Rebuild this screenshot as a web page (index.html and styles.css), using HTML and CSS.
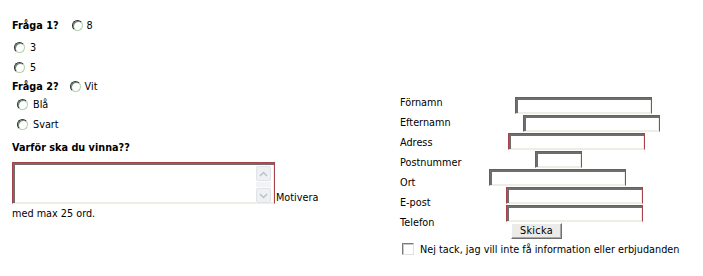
FILE: index.html
```html
<!DOCTYPE html>
<html lang="sv">
<head>
<meta charset="UTF-8"/>
<title>Tävling</title>
<link rel="stylesheet" href="styles.css">
</head>
<body>
<div class="page">
  <!-- Left: questions -->
  <div class="quiz">
    <div class="row r1"><b class="q">Fråga 1?</b><input type="radio" name="q1" class="radio"><span>8</span></div>
    <div class="row r2"><input type="radio" name="q1" class="radio"><span>3</span></div>
    <div class="row r3"><input type="radio" name="q1" class="radio"><span>5</span></div>
    <div class="row r4"><b class="q q2">Fråga 2?</b><input type="radio" name="q2" class="radio"><span>Vit</span></div>
    <div class="row r5 indent"><input type="radio" name="q2" class="radio"><span>Blå</span></div>
    <div class="row r6 indent"><input type="radio" name="q2" class="radio"><span>Svart</span></div>
    <div class="row r7"><b>Varför ska du vinna??</b></div>

    <div class="motivate">
      <span class="ta-wrap">
        <textarea class="ta"></textarea>
        <span class="fake-scroll">
          <span class="sb-btn"><svg width="9" height="6" viewBox="0 0 9 6"><path d="M1 5 L4.5 1.5 L8 5" fill="none" stroke="#b9c2cc" stroke-width="1.5"/></svg></span>
          <span class="sb-track"></span>
          <span class="sb-btn"><svg width="9" height="6" viewBox="0 0 9 6"><path d="M1 1 L4.5 4.5 L8 1" fill="none" stroke="#b9c2cc" stroke-width="1.5"/></svg></span>
        </span>
      </span>
      <span class="hint">Motivera</span>
    </div>
    <div class="hint-2">med max 25 ord.</div>
  </div>

  <!-- Right: contact form -->
  <div class="contact">
    <div class="form-grid">
      <div class="labels">
        <div>Förnamn</div>
        <div>Efternamn</div>
        <div>Adress</div>
        <div>Postnummer</div>
        <div>Ort</div>
        <div>E-post</div>
        <div>Telefon</div>
      </div>
      <div class="fields">
        <input type="text" class="field f-fornamn">
        <input type="text" class="field f-efternamn">
        <input type="text" class="field f-adress">
        <input type="text" class="field short f-postnr">
        <input type="text" class="field f-ort">
        <input type="text" class="field f-epost">
        <input type="text" class="field f-telefon">
        <button class="send">Skicka</button>
      </div>
    </div>
    <label class="optout"><input type="checkbox" class="check"><span>Nej tack, jag vill inte få information eller erbjudanden</span></label>
  </div>
</div>
</body>
</html>
```

FILE: styles.css
```css
/* Global */
html, body {
  margin:0; padding:0;
  background:#fff;
  color:#000;
  font-family:"DejaVu Sans", Verdana, sans-serif;
  font-size:9.7px;
}

.page {
  display:flex;
  align-items:flex-start;
  padding-left:12px;
}

/* Left column => questions */
.quiz {
  width:388px;
  flex-shrink:0;
}
.row {
  display:flex;
  align-items:center;
  height:20px;
}
.r1 { margin-top:15px; }
.r2 { margin-top:2px; }
.r4 { margin-top:-1px; }
.r5 { margin-top:-2px; }
.r7 { margin-top:3px; }
.indent { padding-left:5px; }
.r2, .r3 { padding-left:2px; }
.q { margin-right:13px; }
.q2 { margin-right:11px; }

/* XP-ish radio */
.radio {
  appearance:none; -webkit-appearance:none;
  width:11px; height:11px;
  margin:0 5px 0 0;
  box-sizing:border-box;
  border-radius:50%;
  border:1px solid;
  border-color:#27352a #b3d1ad #b3d1ad #27352a;
  background:#fff;
  box-shadow:inset 1px 1px 0 #6f8a72;
}
.r1 .radio, .r4 .radio { margin-right:4px; }

/* Sunken box with red edge => used by textarea and text fields */
.ta, .field {
  appearance:none; -webkit-appearance:none;
  box-sizing:border-box;
  margin:0;
  padding:0;
  border-style:solid;
  border-width:1px;
  border-color:#a8434b #a8434b #efeee6 #a8434b;
  border-radius:0;
  outline:none;
  background:
    linear-gradient(#6e6e6e, #6e6e6e) left top / 100% 2px no-repeat,
    linear-gradient(#6e6e6e, #6e6e6e) left top / 2px 100% no-repeat,
    linear-gradient(#efeee6, #efeee6) right top / 1px 100% no-repeat,
    linear-gradient(#efeee6, #efeee6) left bottom / 100% 1px no-repeat,
    #fff;
  font:inherit;
}

/* Textarea + "Motivera" */
.motivate {
  display:flex;
  align-items:flex-end;
  margin-top:5px;
}
.ta-wrap {
  position:relative;
  display:block;
  width:263px; height:42px;
}
.ta {
  display:block;
  width:100%; height:100%;
  resize:none;
  overflow:hidden;
}
.fake-scroll {
  position:absolute;
  right:4px; top:4px; bottom:1px;
  width:15px;
  display:flex;
  flex-direction:column;
  background:#fbfbf9;
}
.sb-btn {
  height:15px;
  box-sizing:border-box;
  border:1px solid #e0e4e8;
  border-radius:2px;
  background:#eef0f2;
  display:flex;
  align-items:center;
  justify-content:center;
}
.sb-track {
  flex:1;
  background:#f1f3f7;
  margin:1px 0;
}
.hint {
  line-height:12px;
  margin-left:1px;
}
.hint-2 {
  line-height:14px;
  margin-top:3px;
}

/* Right column => contact form */
.contact {
  margin-top:93px;
}
.form-grid {
  display:flex;
  align-items:flex-start;
}
.labels {
  width:89px;
  line-height:20px;
}
.fields {
  display:flex;
  flex-direction:column;
  align-items:flex-start;
  margin-top:4px;
}
.field {
  width:137px; height:17px;
  margin-bottom:1px;
}
.field.short { width:47px; }
.f-fornamn   { margin-left:26px; }
.f-efternamn { margin-left:34px; }
.f-adress    { margin-left:19px; }
.f-postnr    { margin-left:46px; }
.f-ort       { margin-left:0; }
.f-epost     { margin-left:17px; }
.f-telefon   { margin-left:17px; }

.send {
  margin-left:22px;
  width:51px; height:16px;
  padding:0;
  box-sizing:border-box;
  font:inherit;
  letter-spacing:0.3px;
  color:#000;
  background:#ebebea;
  border:1px solid;
  border-color:#fff #6f6f6f #6f6f6f #fff;
  box-shadow:inset -1px -1px 0 #a9a9a9;
  line-height:14px;
}

.optout {
  display:flex;
  align-items:center;
  height:16px;
  margin-top:2px;
}
.check {
  appearance:none; -webkit-appearance:none;
  width:12px; height:12px;
  margin:0 6px 0 2px;
  box-sizing:border-box;
  border:1px solid;
  border-color:#7a7a7a #e2e2e2 #e2e2e2 #7a7a7a;
  box-shadow:inset 1px 1px 0 #c8c8c8;
  background:#fff;
}
```
